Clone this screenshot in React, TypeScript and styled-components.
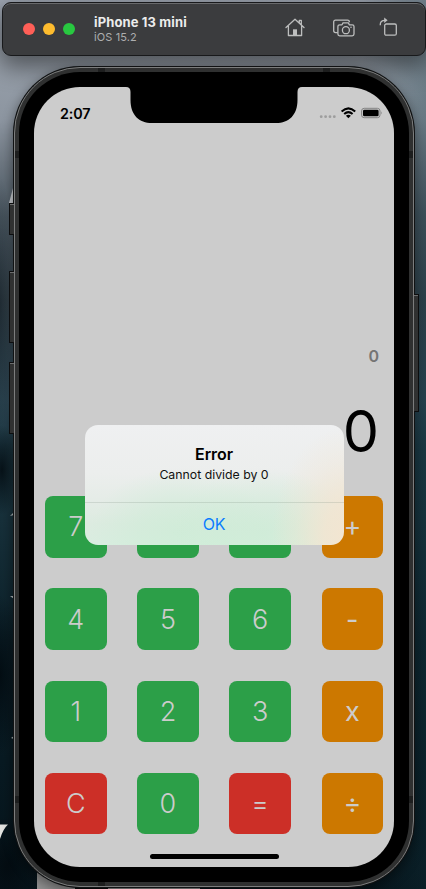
import React from 'react';
import styled, { createGlobalStyle } from 'styled-components';

const GlobalStyle = createGlobalStyle`
  * { box-sizing: border-box; }
  body {
    margin: 0;
    overflow: hidden;
    font-family: Inter, 'Liberation Sans', sans-serif;
    -webkit-font-smoothing: antialiased;
  }
`;

const Desktop = styled.main`
  position: relative;
  width: 426px;
  height: 889px;
  padding: 2px 0 0 2px;
  overflow: hidden;
  display: flex;
  flex-direction: column;
  background:
    linear-gradient(90deg, transparent 85%, rgba(20, 55, 65, 0.3)),
    linear-gradient(180deg, #a0a8b4 0, #98a0aa 55px, #8c95a0 120px, #6c7680 165px, #4c5963 215px, #35434c 300px, #2c4552 400px, #1c3742 450px, #17303a 520px, #0c212a 640px, #081a22 760px, #06141b 889px);
`;

const Wallpaper = styled.svg`
  position: absolute;
  inset: 0;
`;

const Toolbar = styled.header`
  position: relative;
  width: 424px;
  height: 54px;
  padding: 0 27px 0 20px;
  border: 1px solid #18191b;
  border-radius: 9px;
  background: #3b3c3e;
  box-shadow: inset 0 1px 0 #68696b, 0 8px 24px 3px rgba(0, 0, 0, 0.48);
  display: flex;
  align-items: center;
`;

const TrafficLights = styled.div`
  display: flex;
  gap: 8px;
`;

const Light = styled.span<{ $color: string }>`
  width: 12px;
  height: 12px;
  border-radius: 50%;
  background: ${(p) => p.$color};
`;

const DeviceTitle = styled.div`
  margin: 1px 0 0 19px;
  flex: 1;
`;

const DeviceName = styled.div`
  font-size: 13px;
  line-height: 15px;
  font-weight: 700;
  letter-spacing: 0.13px;
  color: #ececec;
`;

const DeviceOs = styled.div`
  font-size: 11px;
  line-height: 14px;
  letter-spacing: 0.1px;
  color: #adaeaf;
`;

const ToolIcons = styled.div`
  display: flex;
  gap: 22px;
  margin-top: -2px;

  svg:first-child {
    margin-right: 4.5px;
  }
`;

const Phone = styled.section`
  position: relative;
  width: 400px;
  height: 820px;
  margin: 11px 0 0 12px;
  flex: none;
  padding: 4px;
  border: 1px solid #7c7d7d;
  border-radius: 66px;
  background: #2f3030;
  box-shadow: 0 0 0 1px #101213, 0 4px 12px 2px rgba(0, 0, 0, 0.4);
`;

const SideKey = styled.i<{ $side: 'left' | 'right'; $top: number; $height: number }>`
  position: absolute;
  ${(p) => p.$side}: -6px;
  top: ${(p) => p.$top}px;
  width: 5px;
  height: ${(p) => p.$height}px;
  background: #303131;
  border: 1px solid #0c0d0e;
  border-${(p) => (p.$side === 'left' ? 'right' : 'left')}: 0;
  border-radius: 1px;
  box-shadow: inset 0 1px 0 #6c6d6d;
`;

const Antenna = styled.i<{ $x: number; $y: number; $flat?: boolean }>`
  position: absolute;
  left: ${(p) => p.$x}px;
  top: ${(p) => p.$y}px;
  width: ${(p) => (p.$flat ? 7 : 4)}px;
  height: ${(p) => (p.$flat ? 4 : 7)}px;
  background: #1d1e1e;
`;

const Bezel = styled.div`
  width: 390px;
  height: 810px;
  padding: 15px;
  border-radius: 61px;
  background: #000;
`;

const Screen = styled.div`
  position: relative;
  width: 360px;
  height: 780px;
  border-radius: 46px;
  overflow: hidden;
  background: #ccc;
  display: flex;
  flex-direction: column;
`;

const Notch = styled.svg`
  position: absolute;
  left: 92px;
  top: 0;
`;

const StatusBar = styled.div`
  height: 52px;
  padding: 0 11px 0 26px;
  display: flex;
  align-items: center;
  justify-content: space-between;
`;

const Clock = styled.time`
  font-size: 14.3px;
  font-weight: 600;
  letter-spacing: -0.1px;
  color: #000;
`;

const Display = styled.div`
  height: 357px;
  padding-right: 15px;
  display: flex;
  flex-direction: column;
  justify-content: flex-end;
  align-items: flex-end;
`;

const History = styled.div`
  font-size: 16px;
  line-height: 20px;
  font-weight: 600;
  color: #747474;
`;

const Value = styled.div`
  margin-top: 29px;
  height: 101px;
  font-size: 57.5px;
  line-height: 73px;
  color: #000;
`;

const Keypad = styled.div`
  padding: 0 11px;
  display: grid;
  grid-template-columns: repeat(4, 61.5px);
  grid-auto-rows: 61.6px;
  gap: 30.7px;
`;

const keyColors = { digit: '#2c9f48', operator: '#cc7800', command: '#cc2f27' };

const Key = styled.button<{ $kind: keyof typeof keyColors }>`
  border: 0;
  padding: 0;
  border-radius: 8px;
  background: ${(p) => keyColors[p.$kind]};
  color: #ccc;
  font-family: inherit;
  font-size: 27px;
  font-weight: ${(p) => (p.$kind === 'operator' ? 400 : 300)};
  line-height: 61px;
`;

const HomeIndicator = styled.div`
  position: absolute;
  left: 116px;
  bottom: 8px;
  width: 129px;
  height: 5px;
  border-radius: 3px;
  background: #000;
`;

const Alert = styled.div`
  position: absolute;
  left: 50.5px;
  top: 338px;
  width: 259px;
  height: 120px;
  border-radius: 13px;
  overflow: hidden;
  text-align: center;
  background:
    radial-gradient(ellipse 75px 110px at 262px 112px, #f3e5d1 0, rgba(243, 229, 209, 0.85) 30%, rgba(243, 229, 209, 0.3) 70%, rgba(243, 229, 209, 0) 100%),
    radial-gradient(ellipse 90px 65px at 178px 108px, rgba(205, 236, 214, 0.75) 0, rgba(205, 236, 214, 0.5) 45%, rgba(205, 236, 214, 0) 100%),
    radial-gradient(ellipse 90px 65px at 95px 108px, rgba(205, 236, 214, 0.75) 0, rgba(205, 236, 214, 0.5) 45%, rgba(205, 236, 214, 0) 100%),
    linear-gradient(#eff0f1 0, #eceeed 40%, #e5ece7 62%, #dcebe0 82%, #d9ede0 100%);
`;

const AlertBody = styled.div`
  height: 78px;
  padding-top: 19px;
  border-bottom: 1px solid rgba(110, 130, 116, 0.2);
`;

const AlertTitle = styled.div`
  font-size: 16px;
  line-height: 20px;
  font-weight: 600;
  letter-spacing: -0.1px;
  color: #000;
`;

const AlertText = styled.div`
  margin-top: 3px;
  font-size: 12.3px;
  line-height: 16px;
  color: #111;
`;

const AlertAction = styled.button`
  width: 100%;
  height: 42px;
  padding: 0;
  border: 0;
  background: transparent;
  color: #0b7cff;
  font-family: inherit;
  font-size: 16px;
  letter-spacing: -0.3px;
`;

const keys: [string, keyof typeof keyColors][] = [
  ['7', 'digit'], ['8', 'digit'], ['9', 'digit'], ['+', 'operator'],
  ['4', 'digit'], ['5', 'digit'], ['6', 'digit'], ['-', 'operator'],
  ['1', 'digit'], ['2', 'digit'], ['3', 'digit'], ['x', 'operator'],
  ['C', 'command'], ['0', 'digit'], ['=', 'command'], ['÷', 'operator'],
];

const WallpaperArt = () => (
  <Wallpaper width="426" height="889" viewBox="0 0 426 889">
    <defs>
      <radialGradient id="shade"><stop stopColor="#02090e" stopOpacity=".8" /><stop offset="1" stopColor="#02090e" stopOpacity="0" /></radialGradient>
    </defs>
    <ellipse cx="0" cy="305" rx="13" ry="130" fill="url(#shade)" opacity=".5" />
    <ellipse cx="2" cy="470" rx="16" ry="45" fill="url(#shade)" />
    <ellipse cx="0" cy="675" rx="24" ry="80" fill="url(#shade)" />
    <ellipse cx="8" cy="866" rx="34" ry="50" fill="url(#shade)" />
    <path d="M13 188V203H9Z" fill="#c6cace" />
    <path d="M10 516L14 512V515Z M10 596H14V599Z M11 738L14 736V739Z" fill="#aeb6b9" />
    <path d="M0 824.500H8Q3 829 0 839Z" fill="#e3e4e1" />
    <path d="M37 860V889H75V860Z M108 884H200V889H108Z" fill="#909090" />
    <path d="M75 884H108V889H75Z" fill="#080b0c" />
  </Wallpaper>
);

const HomeIcon = () => (
  <svg width="22" height="22" viewBox="0 0 22 22" fill="none" stroke="#bdbebe" strokeWidth="1.3" strokeLinejoin="round" strokeLinecap="round">
    <path d="M2 10.5L11 2.3L20 10.5M4.4 9.2V18.5H17.6V9.2M15.3 5.8V3.3H17.3V7.8" />
    <path d="M9 18V12.3H13V18Z" fill="#bdbebe" stroke="none" />
  </svg>
);

const CameraIcon = () => (
  <svg width="24" height="22" viewBox="0 0 24 22" fill="none" stroke="#bdbebe" strokeWidth="1.3" strokeLinejoin="round">
    <path d="M5.8 15.6H3.5Q1.7 15.6 1.7 13.8V5Q1.7 3.2 3.5 3.2H15.5Q17.4 3.2 17.4 5.2" />
    <path d="M7.8 7.8H10L11 5.9H16.3L17.4 7.8H20.2Q22 7.8 22 9.6V17.1Q22 18.9 20.2 18.9H7.7Q5.9 18.9 5.9 17.1V9.6Q5.9 7.8 7.8 7.8Z" />
    <circle cx="13.9" cy="13.2" r="3.5" />
    <circle cx="19" cy="10.2" r=".8" fill="#bdbebe" stroke="none" />
  </svg>
);

const RotateIcon = () => (
  <svg width="20" height="22" viewBox="0 0 20 22" fill="none" stroke="#bdbebe" strokeWidth="1.3" strokeLinejoin="round">
    <rect x="6.7" y="7" width="11.6" height="11.2" rx="1.5" />
    <path d="M2.2 8.2C2.2 5 3.6 3.3 7.2 3.3" />
    <path d="M6.2.6L9.6 3.3L6.2 6Z" fill="#bdbebe" stroke="none" />
  </svg>
);

const StatusIcons = () => (
  <svg width="64" height="14" viewBox="0 0 64 14">
    <g fill="#9d9d9d">
      <circle cx="2.2" cy="10.7" r="1.4" /><circle cx="6.6" cy="10.7" r="1.4" />
      <circle cx="11" cy="10.7" r="1.4" /><circle cx="15.3" cy="10.7" r="1.4" />
    </g>
    <g fill="none" stroke="#000" strokeWidth="2">
      <path d="M22.6 5.6Q29.4-.8 36.2 5.6M25.2 8Q29.4 4.2 33.6 8" />
    </g>
    <path d="M26.9 9.7Q29.4 7.8 31.9 9.7L29.4 12.2Z" fill="#000" />
    <rect x="42.6" y="2.3" width="18.4" height="9.4" rx="2.6" fill="none" stroke="#828282" />
    <rect x="44" y="3.7" width="15.6" height="6.6" rx="1.4" fill="#000" />
    <path d="M62.1 5.2Q63.6 6.8 62.1 8.6Z" fill="#828282" />
  </svg>
);

export default function App() {
  return (
    <>
      <GlobalStyle />
      <Desktop>
        <WallpaperArt />
        <Toolbar>
          <TrafficLights>
            <Light $color="#ff5f57" />
            <Light $color="#febc2e" />
            <Light $color="#28c840" />
          </TrafficLights>
          <DeviceTitle>
            <DeviceName>iPhone 13 mini</DeviceName>
            <DeviceOs>iOS 15.2</DeviceOs>
          </DeviceTitle>
          <ToolIcons>
            <HomeIcon />
            <CameraIcon />
            <RotateIcon />
          </ToolIcons>
        </Toolbar>
        <Phone>
          <SideKey $side="left" $top={135} $height={32} />
          <SideKey $side="left" $top={203} $height={72} />
          <SideKey $side="left" $top={294} $height={72} />
          <SideKey $side="right" $top={226} $height={118} />
          <Antenna $x={0} $y={83} />
          <Antenna $x={394} $y={83} />
          <Antenna $x={0} $y={728} />
          <Antenna $x={394} $y={728} />
          <Antenna $x={83} $y={0} $flat />
          <Antenna $x={308} $y={0} $flat />
          <Antenna $x={83} $y={814} $flat />
          <Bezel>
            <Screen>
              <Notch width="176" height="37" viewBox="0 0 176 37">
                <path d="M0 0Q4.500 0 4.500 5V13C4.500 28 13 36 26 36H150C163 36 171.500 28 171.500 13V5Q171.500 0 176 0Z" />
              </Notch>
              <StatusBar>
                <Clock>2:07</Clock>
                <StatusIcons />
              </StatusBar>
              <Display>
                <History>0</History>
                <Value>0</Value>
              </Display>
              <Keypad>
                {keys.map(([label, kind]) => (
                  <Key key={label} $kind={kind}>{label}</Key>
                ))}
              </Keypad>
              <HomeIndicator />
              <Alert role="alertdialog">
                <AlertBody>
                  <AlertTitle>Error</AlertTitle>
                  <AlertText>Cannot divide by 0</AlertText>
                </AlertBody>
                <AlertAction>OK</AlertAction>
              </Alert>
            </Screen>
          </Bezel>
        </Phone>
      </Desktop>
    </>
  );
}
